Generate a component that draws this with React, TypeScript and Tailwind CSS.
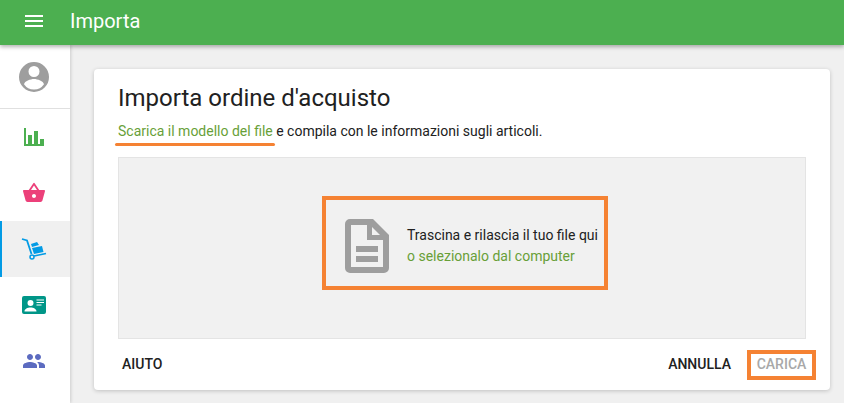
const items = [
  {
    active: false,
    icon: (
      <svg viewBox="0 0 20 18" className="w-5 h-[18px] text-[#4caf50]" fill="currentColor">
        <path d="M0 0h2v16h18v2H0z" />
        <path d="M4 7h4v9H4zM10 3h4v13h-4zM16 11h4v5h-4z" />
      </svg>
    ),
  },
  {
    active: false,
    icon: (
      <svg viewBox="0 0 24 24" className="w-6 h-6 text-[#ec407a]" fill="currentColor">
        <path d="M17.21 9l-4.38-6.56a1 1 0 0 0-1.66 0L6.79 9H2c-.55 0-1 .45-1 1l.04.27 2.54 9.27c.23.84 1 1.46 1.92 1.46h13c.92 0 1.69-.62 1.93-1.46l2.54-9.27L23 10c0-.55-.45-1-1-1h-4.79zM9 9l3-4.4L15 9H9zm3 8c-1.1 0-2-.9-2-2s.9-2 2-2 2 .9 2 2-.9 2-2 2z" />
      </svg>
    ),
  },
  {
    active: true,
    icon: (
      <svg viewBox="0 0 26 26" className="w-[26px] h-[26px] text-[#039be5]" fill="none" stroke="currentColor">
        <path d="M1 3 6 4.500 10.500 18" strokeWidth="1.8" />
        <path d="M13 20 25 17.500" strokeWidth="1.6" />
        <circle cx="11" cy="21" r="2" strokeWidth="1.5" />
        <path d="M11 12l10-2 1.500 6-9.500 2z" fill="currentColor" stroke="none" />
        <path d="M10 8l6-2 2 3-7 2z" fill="currentColor" stroke="none" />
      </svg>
    ),
  },
  {
    active: false,
    icon: (
      <svg viewBox="0 0 24 18" className="w-6 h-[18px] text-[#009688]" fill="currentColor">
        <path
          fillRule="evenodd"
          d="M2 0h20a2 2 0 0 1 2 2v14a2 2 0 0 1-2 2H2a2 2 0 0 1-2-2V2a2 2 0 0 1 2-2zm6.500 4a3 3 0 1 0 0 6 3 3 0 0 0 0-6zM2.500 15.500h12c0-2.500-3-4-6-4s-6 1.500-6 4zM14.500 3.500v1h7.500v-1zm0 2.500v1h7.500V6zm0 2.500v1h5v-1z"
        />
      </svg>
    ),
  },
  {
    active: false,
    icon: (
      <svg viewBox="0 0 24 24" className="w-6 h-6 text-[#5c6bc0]" fill="currentColor">
        <path d="M16 11c1.660 0 2.990-1.340 2.990-3S17.660 5 16 5c-1.660 0-3 1.340-3 3s1.340 3 3 3zm-8 0c1.660 0 2.990-1.340 2.990-3S9.660 5 8 5C6.340 5 5 6.340 5 8s1.340 3 3 3zm0 2c-2.330 0-7 1.170-7 3.500V19h14v-2.500c0-2.330-4.670-3.500-7-3.500zm8 0c-.29 0-.62.020-.97.050 1.160.84 1.970 1.970 1.970 3.450V19h6v-2.500c0-2.330-4.670-3.500-7-3.500z" />
      </svg>
    ),
  },
];

export default function App() {
  return (
    <div className="h-[403px] w-[844px] overflow-hidden flex flex-col bg-[#f0f0f0] font-['Roboto',sans-serif] text-[#212121]">
      {/* Top bar */}
      <header className="relative z-10 h-[45px] shrink-0 bg-[#4caf50] text-white flex items-center pl-[25px] pb-[3px] shadow-[0_2px_4px_rgba(0,0,0,0.3)]">
        <svg viewBox="0 0 18 12" className="w-[18px] h-[12px]" fill="currentColor">
          <path d="M0 0h18v2H0zM0 5h18v2H0zM0 10h18v2H0z" />
        </svg>
        <span className="ml-[27px] text-[20px] leading-none">Importa</span>
      </header>

      <div className="flex flex-1 min-h-0">
        {/* Sidebar */}
        <aside className="w-[70px] shrink-0 bg-white shadow-[1px_0_3px_rgba(0,0,0,0.15)] flex flex-col">
          <div className="h-[64px] shrink-0 flex items-center justify-center pr-[2px] border-b border-[#e0e0e0]">
            <svg viewBox="0 0 30 30" className="w-[30px] h-[30px] text-[#9e9e9e]" fill="currentColor">
              <path
                fillRule="evenodd"
                d="M15 0a15 15 0 1 0 0 30 15 15 0 0 0 0-30zm0 4a5.500 5.500 0 1 1 0 11 5.500 5.500 0 0 1 0-11zm0 23.500a12 12 0 0 1-10-5.200c.5-3.200 6.500-5.300 10-5.300s9.500 2.100 10 5.300a12 12 0 0 1-10 5.200z"
              />
            </svg>
          </div>
          {items.map((item, index) => (
            <div
              key={index}
              className={
                item.active
                  ? 'h-[56px] shrink-0 flex items-center justify-center bg-[#f0f0f0] border-l-2 border-[#039be5] pr-[4px]'
                  : 'h-[56px] shrink-0 flex items-center justify-center pr-[2px]'
              }
            >
              {item.icon}
            </div>
          ))}
        </aside>

        {/* Card */}
        <main className="flex-1 min-w-0 pl-[24px] pr-[14px] pt-[24px]">
          <div className="h-[321px] bg-white rounded-[4px] shadow-[0_1px_4px_rgba(0,0,0,0.2)] flex flex-col px-[24px]">
            <h1 className="mt-[14px] text-[24px] leading-[30px]">Importa ordine d'acquisto</h1>
            <p className="relative mt-[8px] text-[14px] leading-[20px]">
              <span className="text-[#689f38]">Scarica il modello del file</span> e compila con le informazioni sugli articoli.
              <span className="absolute left-[-3px] top-[22px] w-[160px] h-[3px] rounded-full bg-[#f58233]" />
            </p>
            <div className="mt-[16px] h-[182px] bg-[#f1f1f1] border border-[#e4e4e4] flex items-center justify-center pl-[6px] pb-[11px]">
              <div className="w-[286px] h-[94px] border-4 border-[#f58233] flex items-center pl-[19px] pt-[6px]">
                <svg viewBox="0 0 44 54" className="w-[44px] h-[54px] shrink-0 text-[#9e9e9e]" fill="currentColor">
                  <path
                    fillRule="evenodd"
                    d="M5 0H28L44 16V49a5 5 0 0 1-5 5H5a5 5 0 0 1-5-5V5a5 5 0 0 1 5-5zM6 6V48H38V21H22V6zM27 8v8h8zM11 27h22v6H11zM11 37h22v6H11z"
                  />
                </svg>
                <div className="ml-[18px] text-[14px] leading-[21px]">
                  <div>Trascina e rilascia il tuo file qui</div>
                  <div className="text-[#689f38]">o selezionalo dal computer</div>
                </div>
              </div>
            </div>
            <div className="flex-1 flex items-center justify-between text-[14px] font-medium">
              <span className="ml-[4px]">AIUTO</span>
              <div className="flex items-center -mr-[10px]">
                <span>ANNULLA</span>
                <span className="ml-[16px] w-[69px] h-[30px] border-4 border-[#f58233] flex items-center justify-center text-[#a8a8a8]">
                  CARICA
                </span>
              </div>
            </div>
          </div>
        </main>
      </div>
    </div>
  );
}
